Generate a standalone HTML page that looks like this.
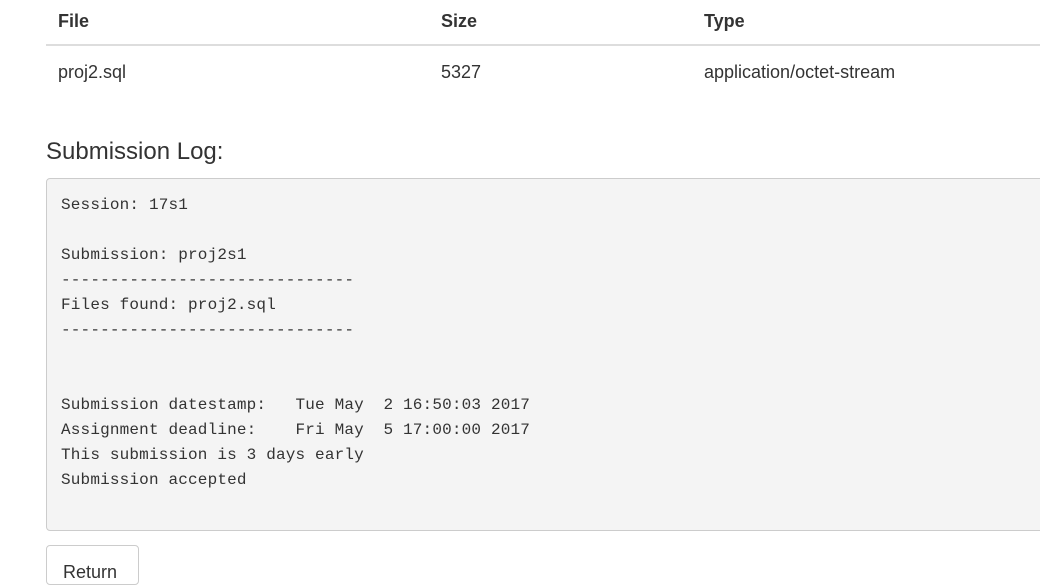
<html><head><style>
body{margin:0;background:#fff;font-family:"Liberation Sans",sans-serif;color:#333;width:1040px;height:562px;overflow:hidden;position:relative}
table{position:absolute;left:46px;top:1px;width:1100px;border-collapse:collapse;font-size:18px}
th{text-align:left;font-weight:bold;height:44px;padding:0 12px;border-bottom:2px solid #ddd;vertical-align:middle;padding-bottom:2px}
td{height:50px;padding:0 12px;padding-top:4px;vertical-align:middle}
h3{position:absolute;left:46px;top:138px;margin:0;font-weight:normal;font-size:24px;color:#333}
pre{position:absolute;left:46px;top:178px;width:1100px;height:337px;margin:0;background:#f4f4f4;border:1px solid #ccc;border-radius:4px;padding:14px 14px 0;font-family:"Liberation Mono",monospace;font-size:16px;line-height:25px;letter-spacing:0.17px;color:#333;box-sizing:content-box}
.btn{position:absolute;left:46px;top:545px;width:93px;height:40px;border:1px solid #ccc;border-radius:4px;font-size:18px;padding:16px 16px 0;box-sizing:border-box}
</style></head><body>
<table><tr><th style="width:359px">File</th><th style="width:239px">Size</th><th>Type</th></tr>
<tr><td>proj2.sql</td><td>5327</td><td>application/octet-stream</td></tr></table>
<h3>Submission Log:</h3>
<pre>Session: 17s1

Submission: proj2s1
------------------------------
Files found: proj2.sql
------------------------------


Submission datestamp:   Tue May  2 16:50:03 2017
Assignment deadline:    Fri May  5 17:00:00 2017
This submission is 3 days early
Submission accepted</pre>
<div class="btn">Return</div>
</body></html>
